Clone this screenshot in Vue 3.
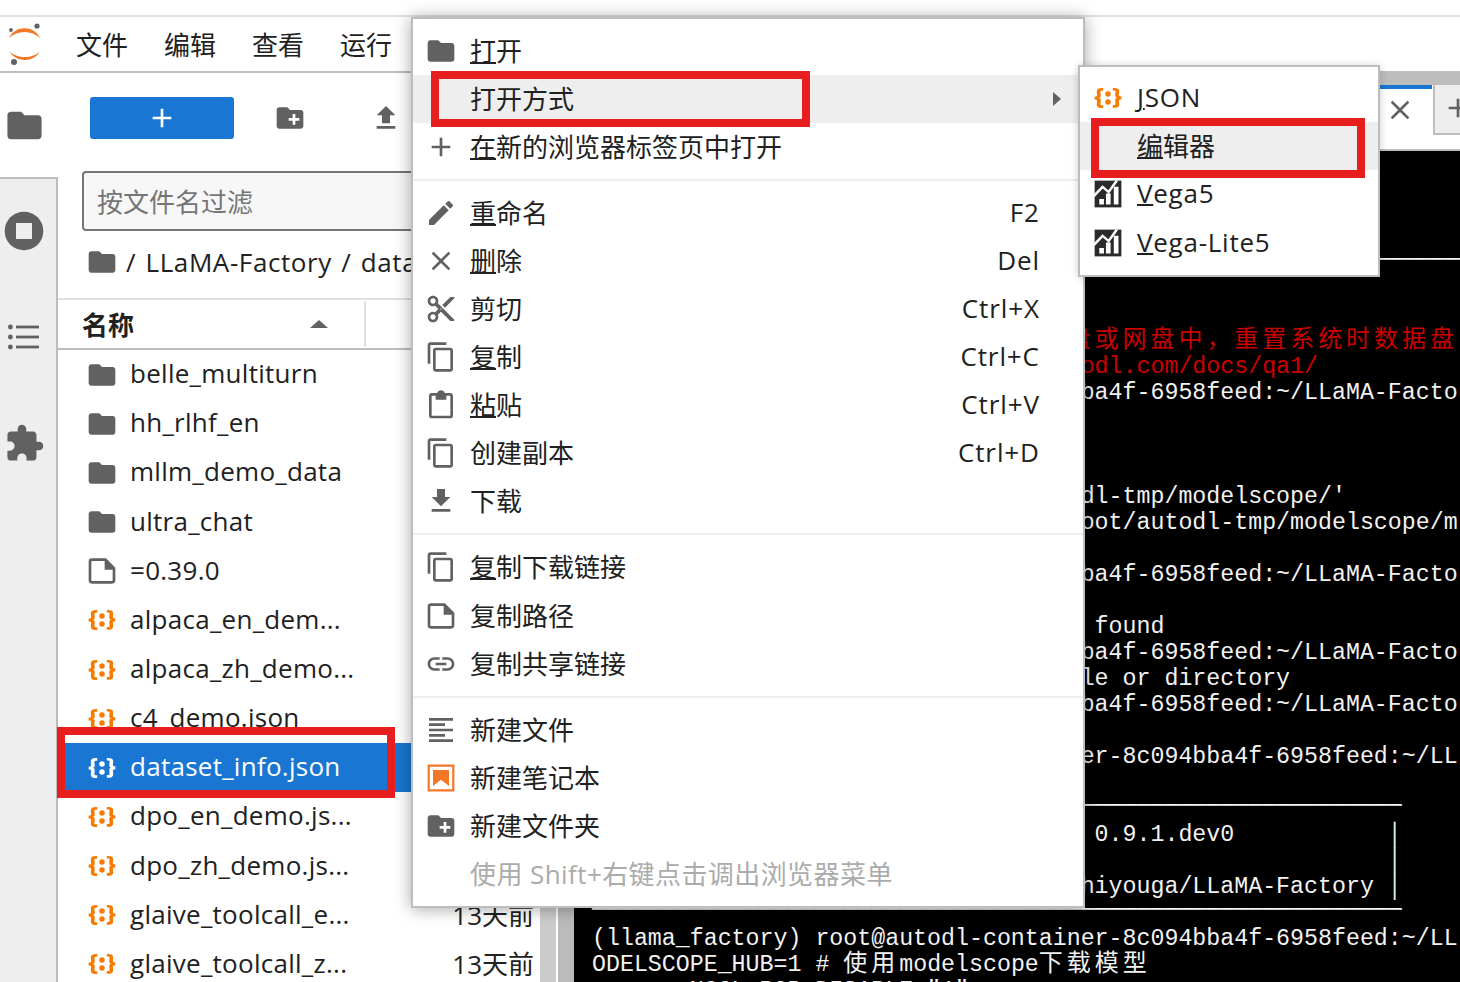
<script setup>
const P = {
  folder: 'M10 4H4c-1.1 0-2 .9-2 2v12c0 1.1.9 2 2 2h16c1.1 0 2-.9 2-2V8c0-1.1-.9-2-2-2h-8l-2-2z',
  add: 'M19 13h-6v6h-2v-6H5v-2h6V5h2v6h6v2z',
  close: 'M19 6.41L17.59 5 12 10.59 6.41 5 5 6.41 10.59 12 5 17.59 6.41 19 12 13.41 17.59 19 19 17.59 13.41 12z',
  edit: 'M3 17.25V21h3.75L17.81 9.94l-3.75-3.75L3 17.25zM20.71 7.04c.39-.39.39-1.02 0-1.41l-2.34-2.34c-.39-.39-1.02-.39-1.41 0l-1.83 1.83 3.75 3.75 1.83-1.83z',
  cut: 'M9.64 7.64c.23-.5.36-1.05.36-1.64 0-2.21-1.79-4-4-4S2 3.79 2 6s1.79 4 4 4c.59 0 1.14-.13 1.64-.36L10 12l-2.36 2.36C7.14 14.13 6.59 14 6 14c-2.21 0-4 1.79-4 4s1.79 4 4 4 4-1.79 4-4c0-.59-.13-1.14-.36-1.64L12 14l7 7h3v-1L9.64 7.64zM6 8c-1.1 0-2-.89-2-2s.9-2 2-2 2 .89 2 2-.9 2-2 2zm0 12c-1.1 0-2-.89-2-2s.9-2 2-2 2 .89 2 2-.9 2-2 2zm6-7.5c-.28 0-.5-.22-.5-.5s.22-.5.5-.5.5.22.5.5-.22.5-.5.5zM19 3l-6 6 2 2 7-7V3z',
  copy: 'M16 1H4c-1.1 0-2 .9-2 2v14h2V3h12V1zm3 4H8c-1.1 0-2 .9-2 2v14c0 1.1.9 2 2 2h11c1.1 0 2-.9 2-2V7c0-1.1-.9-2-2-2zm0 16H8V7h11v14z',
  paste: 'M19 3h-4.2C14.4 1.8 13.3 1 12 1s-2.4.8-2.8 2H5c-1.1 0-2 .9-2 2v15c0 1.1.9 2 2 2h14c1.1 0 2-.9 2-2V5c0-1.1-.9-2-2-2zM19 20H5V5h3v3h8V5h3v15z',
  download: 'M19 9h-4V3H9v6H5l7 7 7-7zM5 18v2h14v-2H5z',
  upload: 'M9 16h6v-6h4l-7-7-7 7h4zm-4 2h14v2H5z',
  file: 'M4.5 2.5H15l7 7v9.5a2.5 2.5 0 0 1-2.5 2.5h-15A2.5 2.5 0 0 1 2 19V5a2.5 2.5 0 0 1 2.5-2.5zM4.5 4.5a.5.5 0 0 0-.5.5V19a.5.5 0 0 0 .5.5h15a.5.5 0 0 0 .5-.5V11h-6V4.5z',
  link: 'M3.9 12c0-1.71 1.39-3.1 3.1-3.1h4V7H7c-2.76 0-5 2.24-5 5s2.24 5 5 5h4v-1.9H7c-1.71 0-3.1-1.39-3.1-3.1zM8 13h8v-2H8v2zm9-6h-4v1.9h4c1.71 0 3.1 1.39 3.1 3.1s-1.39 3.1-3.1 3.1h-4V17h4c2.76 0 5-2.24 5-5s-2.24-5-5-5z',
  text: 'M15 15H3v2h12v-2zm0-8H3v2h12V7zM3 13h18v-2H3v2zm0 8h18v-2H3v2zM3 3v2h18V3H3z',
  newfolder: 'M20 6h-8l-2-2H4c-1.11 0-1.99.89-1.99 2L2 18c0 1.11.89 2 2 2h16c1.11 0 2-.89 2-2V8c0-1.11-.89-2-2-2zm-1 8h-3v3h-2v-3h-3v-2h3V9h2v3h3v2z',
  puzzle: 'M20.5 11H19V7c0-1.1-.9-2-2-2h-4V3.5C13 2.12 11.88 1 10.5 1S8 2.12 8 3.5V5H4c-1.1 0-1.99.9-1.99 2v3.8H3.5c1.49 0 2.7 1.21 2.7 2.7s-1.21 2.7-2.7 2.7H2V20c0 1.1.9 2 2 2h3.8v-1.5c0-1.49 1.21-2.7 2.7-2.7 1.49 0 2.7 1.21 2.7 2.7V22H17c1.1 0 2-.9 2-2v-4h1.5c1.38 0 2.5-1.12 2.5-2.5S21.88 11 20.5 11z',
  json: 'M20.2 11.8c-1.6 0-1.7.5-1.7 1 0 .4.1.9.1 1.3.1.5.1.9.1 1.3 0 1.7-1.4 2.3-3.5 2.3h-.9v-1.9h.5c1.1 0 1.4 0 1.4-.8 0-.3 0-.6-.1-1 0-.4-.1-.8-.1-1.2 0-1.3 0-1.8 1.3-2-1.3-.2-1.3-.7-1.3-2 0-.4.1-.8.1-1.2.1-.4.1-.7.1-1 0-.8-.4-.7-1.4-.8h-.5V4.1h.9c2.2 0 3.5.7 3.5 2.3 0 .4-.1.9-.1 1.3-.1.5-.1.9-.1 1.3 0 .5.2 1 1.7 1v1.8zM1.8 10.1c1.6 0 1.7-.5 1.7-1 0-.4-.1-.9-.1-1.3-.1-.5-.1-.9-.1-1.3 0-1.6 1.4-2.3 3.5-2.3h.9v1.9h-.5c-1 0-1.4 0-1.4.8 0 .3 0 .6.1 1 0 .2.1.6.1 1 0 1.3 0 1.8-1.3 2C6 11.2 6 11.7 6 13c0 .4-.1.8-.1 1.2-.1.3-.1.7-.1 1 0 .8.3.8 1.4.8h.5v1.9h-.9c-2.1 0-3.5-.6-3.5-2.3 0-.4.1-.9.1-1.3.1-.5.1-.9.1-1.3 0-.5-.2-1-1.7-1v-1.8zM11 6.4a1.9 1.9 0 1 0 0 3.8 1.9 1.9 0 1 0 0-3.8zM11 11.9a1.9 1.9 0 1 0 0 3.8 1.9 1.9 0 1 0 0-3.8z',
  notebook1: 'M18.7 3.3v15.4H3.3V3.3h15.4m1.5-1.5H1.8v18.4h18.4V1.8z',
  notebook2: 'M16.5 16.5l-5.5-4.3-5.5 4.3v-11h11z',
  vega: 'M1.8 1.8h18.4v18.4H1.8z',
  vegaCut: 'M1.2 11.2L7.2 5l4.1 3.4L16.4 1.2l1.4 1-6.2 8.6-4.2-3.5-5.7 5.9zM5 14.4h3.2v3.8H5zM9.6 10.6h3.2v7.6H9.6zM15 6h3.2v12.2H15z'
}
const one = (name) => ({ vb: 24, paths: [{ d: P[name] }] })
const jsonIcon = { vb: 22, cls: 'orange', paths: [{ d: P.json }] }
const notebook = { vb: 22, paths: [{ d: P.notebook1, fill: '#f37726' }, { d: P.notebook2, fill: '#f37726' }] }
const vega = { vb: 22, paths: [{ d: P.vega, fill: '#2b2b2b' }, { d: P.vegaCut, fill: '#fff' }] }

const groups = [
  [
    { id: 'open', icon: one('folder'), u: '打', t: '开' },
    { id: 'with', t: '打开方式', hover: true, arrow: true },
    { id: 'tab', icon: one('add'), u: '在', t: '新的浏览器标签页中打开' }
  ],
  [
    { id: 'rename', icon: one('edit'), u: '重', t: '命名', key: 'F2' },
    { id: 'del', icon: one('close'), u: '删', t: '除', key: 'Del' },
    { id: 'cut', icon: one('cut'), t: '剪切', key: 'Ctrl+X' },
    { id: 'copy', icon: one('copy'), u: '复', t: '制', key: 'Ctrl+C' },
    { id: 'paste', icon: one('paste'), u: '粘', t: '贴', key: 'Ctrl+V' },
    { id: 'dup', icon: one('copy'), t: '创建副本', key: 'Ctrl+D' },
    { id: 'down', icon: one('download'), t: '下载' }
  ],
  [
    { id: 'dl', icon: one('copy'), u: '复', t: '制下载链接' },
    { id: 'path', icon: one('file'), t: '复制路径' },
    { id: 'share', icon: one('link'), t: '复制共享链接' }
  ],
  [
    { id: 'nf', icon: one('text'), t: '新建文件' },
    { id: 'nb', icon: notebook, t: '新建笔记本' },
    { id: 'nd', icon: one('newfolder'), t: '新建文件夹' },
    { id: 'hint', t: '使用 Shift+右键点击调出浏览器菜单', muted: true }
  ]
]
const sub = [
  { id: 'j', icon: jsonIcon, u: 'J', t: 'SON', lat: true },
  { id: 'e', u: '编', t: '辑器', hover: true },
  { id: 'v', icon: vega, u: 'V', t: 'ega5', lat: true },
  { id: 'vl', icon: vega, u: 'V', t: 'ega-Lite5', lat: true }
]
const files = [
  { n: 'belle_multiturn', i: one('folder') },
  { n: 'hh_rlhf_en', i: one('folder') },
  { n: 'mllm_demo_data', i: one('folder') },
  { n: 'ultra_chat', i: one('folder') },
  { n: '=0.39.0', i: one('file') },
  { n: 'alpaca_en_dem...', i: jsonIcon },
  { n: 'alpaca_zh_demo...', i: jsonIcon },
  { n: 'c4_demo.json', i: jsonIcon },
  { n: 'dataset_info.json', i: jsonIcon, sel: true },
  { n: 'dpo_en_demo.js...', i: jsonIcon },
  { n: 'dpo_zh_demo.js...', i: jsonIcon },
  { n: 'glaive_toolcall_e...', i: jsonIcon, d: '13天前' },
  { n: 'glaive_toolcall_z...', i: jsonIcon, d: '13天前' }
]

const at = (col, s) => ' '.repeat(col) + s
const prompt = at(35, 'ba4f-6958feed:~/LLaMA-Facto')
const dash = '─'
const rows = {
  3: { s: at(56, dash.repeat(14)) },
  6: { s: at(34, '盘或网盘中，重置系统时数据盘'), red: true },
  7: { s: at(35, 'odl.com/docs/qa1/'), red: true },
  8: { s: prompt },
  12: { s: at(35, "dl-tmp/modelscope/'") },
  13: { s: at(35, 'oot/autodl-tmp/modelscope/m') },
  15: { s: prompt },
  17: { s: at(36, 'found') },
  18: { s: prompt },
  19: { s: at(35, 'le or directory') },
  20: { s: prompt },
  22: { s: at(35, 'er-8c094bba4f-6958feed:~/LL') },
  24: { s: at(35, dash.repeat(23)) },
  25: { s: at(36, '0.9.1.dev0') + at(11, '│') },
  26: { s: at(57, '│') },
  27: { s: at(35, 'hiyouga/LLaMA-Factory │') },
  28: { s: dash.repeat(58) },
  29: { s: '(llama_factory) root@autodl-container-8c094bba4f-6958feed:~/LL' },
  30: { s: 'ODELSCOPE_HUB=1 # 使用modelscope下载模型' },
  31: { s: at(7, 'NCCL_P2P_DISABLE="1"') }
}
const split = (s) => (s.match(/[\u4e00-\u9fff\uff00-\uffef]+|─+|[^\u4e00-\u9fff\uff00-\uffef─]+/g) || []).map((t) => ({
  t,
  cjk: /^[\u4e00-\u9fff\uff00-\uffef]/.test(t),
  dash: t[0] === '─'
}))
const termLines = Array.from({ length: 32 }, (_, i) => ({
  id: i,
  red: rows[i] ? rows[i].red : false,
  segs: rows[i] ? split(rows[i].s) : []
}))
</script>

<template>
  <div class="app">
    <div class="topline"></div>

    <header class="menubar">
      <svg class="logo" viewBox="0 0 44 46" width="44" height="46">
        <path d="M8 17C14 4 33 4 39 17C31 9 16 9 8 17z" fill="#f37726" />
        <path d="M8 30C16 38 32 38 39 30C33 42 15 42 8 30z" fill="#f37726" />
        <circle cx="36" cy="5" r="2.6" fill="#616161" />
        <circle cx="10" cy="9" r="1.9" fill="#616161" />
        <circle cx="13" cy="41" r="3" fill="#616161" />
      </svg>
      <nav class="menu-names">
        <span>文件</span><span>编辑</span><span>查看</span><span>运行</span>
      </nav>
    </header>

    <div class="main">
      <aside class="sidebar">
        <div class="side-active">
          <svg class="ic side-ic" viewBox="0 0 24 24"><path :d="P.folder" /></svg>
        </div>
        <div class="side-rest">
          <div class="side-item">
            <svg viewBox="0 0 40 40" width="40" height="40">
              <circle cx="20" cy="20" r="19.3" fill="#616161" />
              <rect x="12" y="12" width="16" height="16" fill="#eee" />
            </svg>
          </div>
          <div class="side-item">
            <svg viewBox="0 0 40 40" width="40" height="40" fill="#616161">
              <circle cx="6.4" cy="10" r="2.4" /><rect x="12" y="8.6" width="23" height="2.8" />
              <circle cx="6.4" cy="20" r="2.4" /><rect x="12" y="18.6" width="23" height="2.8" />
              <circle cx="6.4" cy="30" r="2.4" /><rect x="12" y="28.6" width="23" height="2.8" />
            </svg>
          </div>
          <div class="side-item">
            <svg class="ic side-ic" viewBox="0 0 24 24"><path :d="P.puzzle" /></svg>
          </div>
        </div>
      </aside>

      <section class="browser">
        <div class="toolbar">
          <button class="new-btn">
            <svg class="ic white" viewBox="0 0 24 24"><path :d="P.add" /></svg>
          </button>
          <svg class="ic tool-a" viewBox="0 0 24 24"><path :d="P.newfolder" /></svg>
          <svg class="ic tool-b" viewBox="0 0 24 24"><path :d="P.upload" /></svg>
        </div>
        <div class="filter">按文件名过滤</div>
        <div class="crumbs">
          <svg class="ic" viewBox="0 0 24 24"><path :d="P.folder" /></svg>
          <span>/ LLaMA-Factory / data</span>
        </div>
        <div class="list-head">
          <strong>名称</strong>
          <svg class="caret" viewBox="0 0 18 8" width="18" height="8"><path d="M0 8L9 0l9 8z" fill="#616161" /></svg>
          <i class="head-sep"></i>
        </div>
        <div class="file-list">
          <div v-for="f in files" :key="f.n" class="file" :class="{ sel: f.sel }">
            <svg class="ic" :class="f.sel ? 'white' : f.i.cls" :viewBox="`0 0 ${f.i.vb} ${f.i.vb}`">
              <path v-for="p in f.i.paths" :key="p.d" :d="p.d" />
            </svg>
            <span class="fname">{{ f.n }}</span>
            <span class="fdate">{{ f.d }}</span>
          </div>
        </div>
      </section>

      <div class="handle"></div>
      <div class="handle second"></div>

      <section class="pane">
        <div class="tabbar">
          <div class="tab-active">
            <svg class="ic tab-close" viewBox="0 0 24 24"><path :d="P.close" /></svg>
          </div>
          <div class="tab-add">
            <svg class="ic" viewBox="0 0 24 24"><path :d="P.add" /></svg>
          </div>
        </div>
        <div class="terminal">
          <div v-for="l in termLines" :key="l.id" class="tline" :class="{ red: l.red }"><span v-for="(s, i) in l.segs" :key="i" :class="{ tcjk: s.cjk, tdash: s.dash }">{{ s.t }}</span></div>
        </div>
      </section>
    </div>

    <div class="ctx">
      <template v-for="(g, gi) in groups" :key="gi">
        <div v-if="gi" class="sep"></div>
        <div v-for="m in g" :key="m.id" class="mi" :class="{ hover: m.hover, muted: m.muted }">
          <span class="mi-ic">
            <svg v-if="m.icon" class="ic" :class="m.icon.cls" :viewBox="`0 0 ${m.icon.vb} ${m.icon.vb}`">
              <path v-for="p in m.icon.paths" :key="p.d" :d="p.d" :fill="p.fill" />
            </svg>
          </span>
          <span class="mi-t"><u v-if="m.u">{{ m.u }}</u>{{ m.t }}</span>
          <span v-if="m.key" class="mi-key">{{ m.key }}</span>
          <svg v-if="m.arrow" class="arrow" viewBox="0 0 8 14" width="8" height="14"><path d="M0 0l8 7-8 7z" fill="#616161" /></svg>
        </div>
      </template>
    </div>

    <div class="ctx submenu">
      <div v-for="m in sub" :key="m.id" class="mi" :class="{ hover: m.hover, lat: m.lat }">
        <span class="mi-ic">
          <svg v-if="m.icon" class="ic" :class="m.icon.cls" :viewBox="`0 0 ${m.icon.vb} ${m.icon.vb}`">
            <path v-for="p in m.icon.paths" :key="p.d" :d="p.d" :fill="p.fill" />
          </svg>
        </span>
        <span class="mi-t"><u>{{ m.u }}</u>{{ m.t }}</span>
      </div>
    </div>

    <div class="mark mark-with"></div>
    <div class="mark mark-editor"></div>
    <div class="mark mark-file"></div>
  </div>
</template>

<style>
html, body { margin: 0; background: #fff; overflow: hidden; }
</style>

<style scoped>
.app {
  position: relative;
  width: 1460px;
  height: 982px;
  overflow: hidden;
  display: flex;
  flex-direction: column;
  background: #fff;
  color: #212121;
  font-family: "Open Sans", "Noto Sans CJK SC", sans-serif;
  font-size: 26px;
}
.ic { width: 32px; height: 32px; fill: #616161; flex: none; display: block; }
.ic.orange { fill: #f57c00; }
.ic.white { fill: #fff; }

.topline { height: 15px; border-bottom: 2px solid #e0e0e0; flex: none; }

.menubar {
  height: 54px;
  flex: none;
  border-bottom: 2px solid #bdbdbd;
  display: flex;
  align-items: center;
  padding-left: 1px;
}
.logo { flex: none; }
.menu-names { display: flex; gap: 36px; margin-left: 31px; font-size: 26px; }

.main { flex: 1; display: flex; min-height: 0; }

.sidebar { width: 58px; flex: none; display: flex; flex-direction: column; }
.side-active { height: 104px; flex: none; padding-right: 10px; display: flex; align-items: center; justify-content: center; }
.side-ic { width: 41px; height: 41px; }
.side-rest {
  flex: 1;
  background: #eee;
  border-top: 2px solid #bdbdbd;
  border-right: 2px solid #bdbdbd;
  padding-right: 8px;
}
.side-item { height: 106px; display: flex; align-items: center; justify-content: center; margin-top: -1px; margin-bottom: 1px; }

.browser { width: 482px; flex: none; display: flex; flex-direction: column; min-height: 0; overflow: hidden; }
.toolbar { display: flex; align-items: center; padding: 24px 0 0 32px; flex: none; }
.new-btn {
  width: 144px;
  height: 42px;
  background: #1976d2;
  border: 0;
  border-radius: 3px;
  padding: 0;
  display: flex;
  align-items: center;
  justify-content: center;
}
.tool-a { margin-left: 40px; }
.tool-b { margin-left: 64px; }
.filter {
  flex: none;
  box-sizing: border-box;
  height: 60px;
  width: 440px;
  margin: 32px 0 0 24px;
  padding-left: 13px;
  border: 2px solid #757575;
  border-radius: 4px;
  background: #f7f7f7;
  color: #757575;
  display: flex;
  align-items: center;
}
.crumbs {
  flex: none;
  box-sizing: border-box;
  height: 67px;
  padding: 0 0 6px 28px;
  display: flex;
  align-items: center;
  gap: 8px;
  white-space: nowrap;
  letter-spacing: 0.6px;
  word-spacing: 2px;
}
.list-head {
  flex: none;
  box-sizing: border-box;
  height: 52px;
  border-top: 2px solid #e0e0e0;
  border-bottom: 2px solid #bdbdbd;
  display: flex;
  align-items: center;
  padding-left: 24px;
  position: relative;
}
.list-head strong { font-weight: 700; width: 228px; }
.caret { margin-left: 0; flex: none; }
.head-sep { width: 2px; height: 46px; background: #e0e0e0; margin-left: 36px; flex: none; }

.file-list { flex: 1; min-height: 0; overflow: hidden; }
.file {
  height: 49.17px;
  display: flex;
  align-items: center;
  gap: 12px;
  padding: 0 6px 0 28px;
  white-space: nowrap;
}
.file.sel { background: #1976d2; color: #fff; }
.fname { flex: 1; letter-spacing: 0.27px; margin-top: -3px; }
.fdate { flex: none; margin-top: -3px; }

.handle { width: 16px; flex: none; background: #ccc; }
.handle.second { margin-left: 2px; background: #bbb; }

.pane { flex: 1; min-width: 0; display: flex; flex-direction: column; }
.tabbar {
  flex: none;
  height: 78px;
  padding-top: 12px;
  box-sizing: border-box;
  background: linear-gradient(#bdbdbd 12px, #fff 12px);
  border-bottom: 2px solid #bdbdbd;
  display: flex;
}
.tab-active {
  width: 858px;
  flex: none;
  box-sizing: border-box;
  border-top: 4px solid #1976d2;
  background: #fff;
  display: flex;
  align-items: center;
  justify-content: flex-end;
  padding: 0 16px 19px 0;
}
.tab-add {
  flex: 1;
  height: 50px;
  box-sizing: border-box;
  margin-left: 1px;
  background: #eee;
  border-left: 2px solid #bdbdbd;
  border-bottom: 2px solid #bdbdbd;
  padding: 7px 0 0 7px;
}
.terminal {
  flex: 1;
  min-height: 0;
  overflow: hidden;
  background: #000;
  color: #f2f2f2;
  padding: 21px 0 0 18px;
  font-family: "Liberation Mono", monospace;
  font-size: 23.28px;
  line-height: 26px;
}
.tline { height: 26px; white-space: pre; }
.tline.red { color: #cd0000; }
.tcjk {
  font-family: "Noto Sans CJK SC", sans-serif;
  font-size: 24px;
  letter-spacing: 3.94px;
  line-height: 0;
}
.tdash { line-height: 0; vertical-align: 3px; }

.ctx {
  position: absolute;
  left: 411px;
  top: 17px;
  width: 674px;
  height: 891px;
  box-sizing: border-box;
  background: #fff;
  border: 2px solid #bdbdbd;
  padding-top: 8px;
  box-shadow: 0 1px 16px rgba(0, 0, 0, 0.35);
}
.submenu {
  left: 1078px;
  top: 65px;
  width: 302px;
  height: 212px;
  padding-top: 7px;
  box-shadow: 0 1px 8px rgba(0, 0, 0, 0.2);
}
.mi {
  height: 48.06px;
  display: flex;
  align-items: center;
  padding: 0 44px 0 12px;
  white-space: nowrap;
}
.submenu .mi { height: 48.2px; }
.mi.hover { background: #eee; }
.mi.muted { color: #ababab; letter-spacing: 0.42px; }
.mi.lat .mi-t { letter-spacing: 0.75px; }
.mi-ic { width: 32px; height: 32px; flex: none; margin-right: 13px; }
.mi-t { flex: 1; margin-top: -2px; }
.mi-t u { text-decoration-thickness: 2px; }
.mi-key { flex: none; margin-top: -2px; letter-spacing: 0.9px; margin-right: -0.9px; }
.arrow { flex: none; margin-right: -22px; }
.sep { height: 2px; background: #eee; margin: 8px 0; }

.mark {
  position: absolute;
  box-sizing: border-box;
  border: 8px solid #e81e1e;
  pointer-events: none;
}
.mark-with { left: 431px; top: 71px; width: 379px; height: 56px; }
.mark-editor { left: 1091px; top: 118px; width: 274px; height: 60px; }
.mark-file { left: 57px; top: 727px; width: 338px; height: 71px; }
</style>
